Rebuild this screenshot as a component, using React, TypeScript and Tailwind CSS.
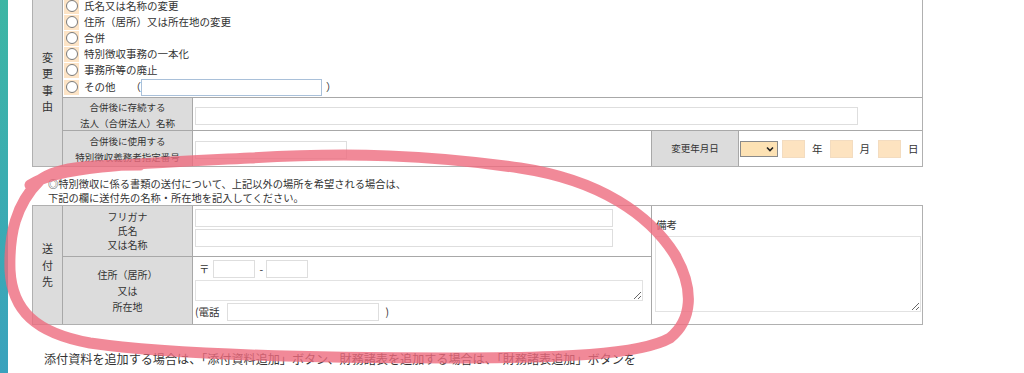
import React from 'react'

const radios = ['氏名又は名称の変更', '住所（居所）又は所在地の変更', '合併', '特別徴収事務の一本化', '事務所等の廃止']

function Radio({ label }: { label: string }) {
  return (
    <div className="flex items-center h-[16px]">
      <span className="w-[15px] h-[15px] bg-[#fde4c6] flex items-center justify-center">
        <span className="w-[12px] h-[12px] rounded-full border border-[#7a7a7a] bg-white" />
      </span>
      <span className="ml-[5px] text-[10.5px]">{label}</span>
    </div>
  )
}

function Field({ className }: { className: string }) {
  return <div className={'border border-[#dedede] bg-white ' + className} />
}

function Vertical({ text }: { text: string }) {
  return (
    <div className="flex flex-col items-center justify-center h-full bg-[#dcdcdc] text-[11px] leading-[16.5px]">
      {text.split('').map((c, i) => (
        <span key={i}>{c}</span>
      ))}
    </div>
  )
}

export default function App() {
  return (
    <div className="relative w-[1024px] h-[373px] overflow-hidden bg-white flex text-[#333] font-['Noto_Sans_CJK_JP',sans-serif]">
      {/* left teal strip */}
      <div className="w-[8px] h-full bg-gradient-to-b from-[#3db6a4] to-[#3aa2bd]" />

      <div className="pl-[24px] flex flex-col">
        {/* 変更事由 table */}
        <div className="-mt-[4px] grid grid-cols-[29px_129px_458px_86px_183px] grid-rows-[100px_32px_35px] gap-px bg-[#a8a8a8] border border-[#b0b0b0]">
          <div className="row-span-3">
            <Vertical text="変更事由" />
          </div>
          <div className="col-span-4 bg-white pl-[1px] pt-[1px]">
            {radios.map((r) => (
              <Radio key={r} label={r} />
            ))}
            <div className="flex items-center h-[18px]">
              <span className="w-[15px] h-[15px] bg-[#fde4c6] flex items-center justify-center">
                <span className="w-[12px] h-[12px] rounded-full border border-[#7a7a7a] bg-white" />
              </span>
              <span className="ml-[5px] text-[10.5px]">その他</span>
              <span className="ml-[15px] text-[10.5px]">（</span>
              <div className="w-[181px] h-[17px] border border-[#a9c0d9] bg-white" />
              <span className="ml-[4px] text-[10.5px]">）</span>
            </div>
          </div>

          <div className="bg-[#dcdcdc] flex flex-col items-center justify-center text-[9.5px] leading-[16px] pt-[1px]">
            <span>合併後に存続する</span>
            <span>法人（合併法人）名称</span>
          </div>
          <div className="col-span-3 bg-white flex items-center pl-[2px] pt-[3px]">
            <Field className="w-[663px] h-[18px]" />
          </div>

          <div className="bg-[#dcdcdc] flex flex-col items-center justify-center text-[9.5px] leading-[16px]">
            <span>合併後に使用する</span>
            <span>特別徴収義務者指定番号</span>
          </div>
          <div className="bg-white flex items-center pl-[2px] pt-[3px]">
            <Field className="w-[152px] h-[18px]" />
          </div>
          <div className="bg-[#dcdcdc] flex items-center justify-center text-[9.5px]">変更年月日</div>
          <div className="bg-white flex items-center pl-[1px] text-[10.5px]">
            <div className="w-[38px] h-[16px] border border-[#8a8a8a] bg-[#fde2b4] flex items-center justify-end pr-[3px]">
              <svg width="8" height="6" viewBox="0 0 8 6">
                <path d="M1 1.5 L4 4.5 L7 1.5" fill="none" stroke="#222" strokeWidth="1.6" />
              </svg>
            </div>
            <div className="ml-[4px] w-[23px] h-[18px] bg-[#fde3c0] border border-[#f3dcc0]" />
            <span className="ml-[7px]">年</span>
            <div className="ml-[7px] w-[23px] h-[18px] bg-[#fde3c0] border border-[#f3dcc0]" />
            <span className="ml-[7px]">月</span>
            <div className="ml-[8px] w-[23px] h-[18px] bg-[#fde3c0] border border-[#f3dcc0]" />
            <span className="ml-[7px]">日</span>
          </div>
        </div>

        {/* note */}
        <div className="mt-[10px] pl-[16px] text-[10.25px] leading-[14px]">
          <p>◎特別徴収に係る書類の送付について、上記以外の場所を希望される場合は、</p>
          <p>下記の欄に送付先の名称・所在地を記入してください。</p>
        </div>

        {/* 送付先 table */}
        <div className="grid grid-cols-[29px_129px_458px_270px] grid-rows-[50px_67px] gap-px bg-[#a8a8a8] border border-[#b0b0b0]">
          <div className="row-span-2">
            <Vertical text="送付先" />
          </div>
          <div className="bg-[#dcdcdc] flex flex-col items-center justify-center text-[10px] leading-[14px]">
            <span>フリガナ</span>
            <span>氏名</span>
            <span>又は名称</span>
          </div>
          <div className="bg-white flex flex-col gap-[2px] pl-[2px] pt-[3px]">
            <Field className="w-[418px] h-[18px]" />
            <Field className="w-[418px] h-[18px]" />
          </div>
          <div className="row-span-2 bg-white pl-[3px] pt-[11px] text-[10.5px]">
            <div className="leading-[16px] pl-[1px]">備考</div>
            <textarea className="mt-[3px] block w-[266px] h-[76px] border border-[#e2e2e2] outline-none" />
          </div>

          <div className="bg-[#dcdcdc] flex flex-col items-center justify-center text-[10px] leading-[16px]">
            <span>住所（居所）</span>
            <span>又は</span>
            <span>所在地</span>
          </div>
          <div className="bg-white pl-[2px] pt-[3px] text-[10.5px]">
            <div className="flex items-center h-[18px]">
              <span className="ml-[4px]">〒</span>
              <Field className="ml-[3px] w-[42px] h-[18px]" />
              <span className="ml-[5px]">-</span>
              <Field className="ml-[3px] w-[42px] h-[18px]" />
            </div>
            <textarea className="mt-[2px] block w-[448px] h-[21px] border border-[#e2e2e2] outline-none" />
            <div className="flex items-center h-[18px] mt-[2px]">
              <span>(電話</span>
              <Field className="ml-[7px] w-[152px] h-[18px]" />
              <span className="ml-[7px]">)</span>
            </div>
          </div>
        </div>

        <p className="mt-[26px] pl-[12px] text-[12.1px] leading-[16px]">
          添付資料を追加する場合は、「添付資料追加」ボタン、財務諸表を追加する場合は、「財務諸表追加」ボタンを
        </p>
      </div>

      {/* hand-drawn highlight */}
      <svg className="absolute inset-0 pointer-events-none" width="1024" height="373" viewBox="0 0 1024 373">
        <path
          d="M 30 185 C 60 165, 150 163, 250 158 C 350 152, 430 155, 520 168 C 600 180, 650 215, 675 255 C 695 290, 692 320, 670 338 C 640 355, 560 358, 450 358 C 330 358, 180 356, 90 343 C 35 333, 12 310, 10 270 C 9 235, 15 205, 40 180 C 60 165, 100 165, 140 165"
          fill="none"
          stroke="#ee6c7e"
          strokeOpacity="0.8"
          strokeWidth="11"
          strokeLinecap="round"
          strokeLinejoin="round"
        />
      </svg>
    </div>
  )
}
